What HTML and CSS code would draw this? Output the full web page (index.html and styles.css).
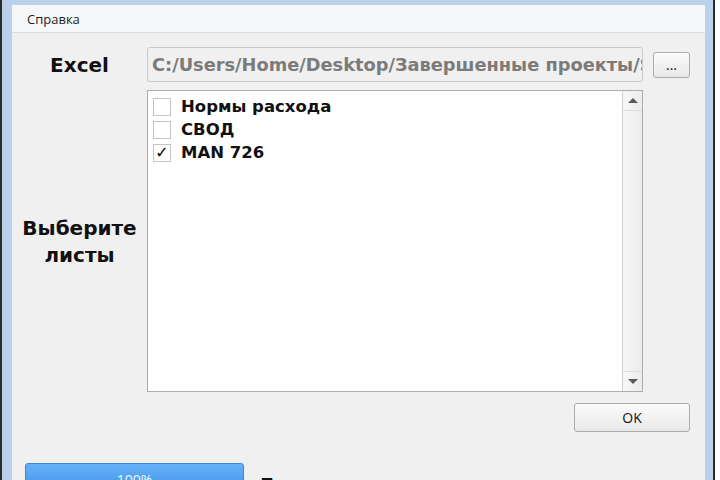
FILE: index.html
```html
<!DOCTYPE html>
<html lang="ru">
<head>
  <meta charset="UTF-8">
  <title>Excel</title>
  <link rel="stylesheet" href="styles.css">
</head>
<body>
  <div class="frame">
    <div class="client">
      <div class="menubar">
        <span class="menu-item">Справка</span>
      </div>

      <div class="form">
        <div class="label">Excel</div>
        <div class="path"><span>C:/Users/Home/Desktop/Завершенные проекты/S</span></div>
        <div class="side">
          <button class="btn small">...</button>
        </div>

        <div class="label">Выберите<br>листы</div>
        <div class="list">
          <div class="items">
            <label class="item"><span class="check"></span>Нормы расхода</label>
            <label class="item"><span class="check"></span>СВОД</label>
            <label class="item"><span class="check checked">✓</span>MAN 726</label>
          </div>
          <div class="scrollbar">
            <div class="arrow up"></div>
            <div class="track"></div>
            <div class="arrow down"></div>
          </div>
        </div>
        <div></div>
      </div>

      <div class="actions">
        <button class="btn ok">OK</button>
      </div>

      <div class="status">
        <div class="progress">100%</div>
        <div class="status-text">Готово</div>
      </div>
    </div>
  </div>
</body>
</html>
```

FILE: styles.css
```css
* {
  margin: 0;
  padding: 0;
  box-sizing: border-box;
}
body {
  background: #ffffff;
  width: 720px;
  height: 480px;
  overflow: hidden;
}
.frame {
  width: 715px;
  height: 480px;
  background: #b9d1ea;
  border-left: 2px solid #2b2b2b;
  border-right: 2px solid #2b2b2b;
  padding: 5px 8px 0 10px;
}
.client {
  height: 100%;
  background: #f0f0f0;
  font-family: "DejaVu Sans", Verdana, sans-serif;
}
.menubar {
  height: 28px;
  background: #f5f6f7;
  border-bottom: 1px solid #dcdcdc;
  padding-left: 15px;
  display: flex;
  align-items: center;
}
.menu-item {
  font-family: "Open Sans", "Noto Sans", sans-serif;
  font-size: 13px;
  color: #1e1e1e;
}
.form {
  display: grid;
  grid-template-columns: 135px 496px 62px;
  grid-template-rows: 35px 302px;
  row-gap: 8px;
  padding-top: 14px;
}
.label {
  display: flex;
  align-items: center;
  justify-content: center;
  text-align: center;
  font-weight: bold;
  font-size: 20px;
  line-height: 27px;
  color: #111;
  padding-top: 2px;
}
.path {
  background: #f0f0f0;
  border: 1px solid #c8c8c8;
  border-radius: 3px;
  padding-left: 4px;
  font-weight: bold;
  font-size: 17.8px;
  line-height: 33px;
  color: #7b7b7b;
  white-space: nowrap;
  overflow: hidden;
}
.side {
  display: flex;
  align-items: center;
  padding-left: 10px;
}
.btn {
  background: linear-gradient(#fbfbfb, #e8e8e8);
  border: 1px solid #acacac;
  border-radius: 3px;
  font-family: "Open Sans", "Noto Sans", sans-serif;
  color: #111;
}
.small {
  width: 37px;
  height: 26px;
  font-size: 14px;
  line-height: 18px;
}
.list {
  display: flex;
  background: #ffffff;
  border: 1px solid #adadad;
}
.items {
  flex: 1;
  padding: 4px 5px;
}
.item {
  display: flex;
  align-items: center;
  height: 23px;
  font-weight: bold;
  font-size: 16.5px;
  color: #111;
}
.check {
  width: 18px;
  height: 18px;
  border: 1px solid #c4c4c4;
  background: #fff;
  margin-right: 10px;
  display: flex;
  align-items: center;
  justify-content: center;
  font-size: 16px;
  font-weight: bold;
  color: #000;
}
.scrollbar {
  width: 20px;
  display: flex;
  flex-direction: column;
  border-left: 1px solid #d0d0d0;
  background: linear-gradient(90deg, #f7f7f7, #ececec);
}
.arrow {
  height: 20px;
  display: flex;
  align-items: center;
  justify-content: center;
}
.arrow.up {
  border-bottom: 1px solid #dcdcdc;
}
.arrow.down {
  border-top: 1px solid #dcdcdc;
}
.arrow::before {
  content: "";
  border-left: 5px solid transparent;
  border-right: 5px solid transparent;
}
.arrow.up::before {
  border-bottom: 5px solid #5a5a5a;
}
.arrow.down::before {
  border-top: 5px solid #5a5a5a;
}
.track {
  flex: 1;
}
.actions {
  display: flex;
  justify-content: flex-end;
  padding-right: 15px;
  margin-top: 11px;
}
.ok {
  width: 116px;
  height: 29px;
  font-size: 14px;
}
.status {
  display: flex;
  align-items: flex-start;
  margin-top: 31px;
  padding-left: 13px;
}
.progress {
  width: 219px;
  height: 30px;
  background: linear-gradient(#66b1f8, #3f93ea);
  border: 1px solid #3b86d6;
  border-radius: 3px;
  color: #f4f8ff;
  font-family: "Open Sans", "Noto Sans", sans-serif;
  font-size: 14px;
  line-height: 19px;
  text-align: center;
  padding-top: 6px;
}
.status-text {
  margin-left: 16px;
  margin-top: 10px;
  font-weight: bold;
  font-size: 20px;
  color: #111;
}
```
